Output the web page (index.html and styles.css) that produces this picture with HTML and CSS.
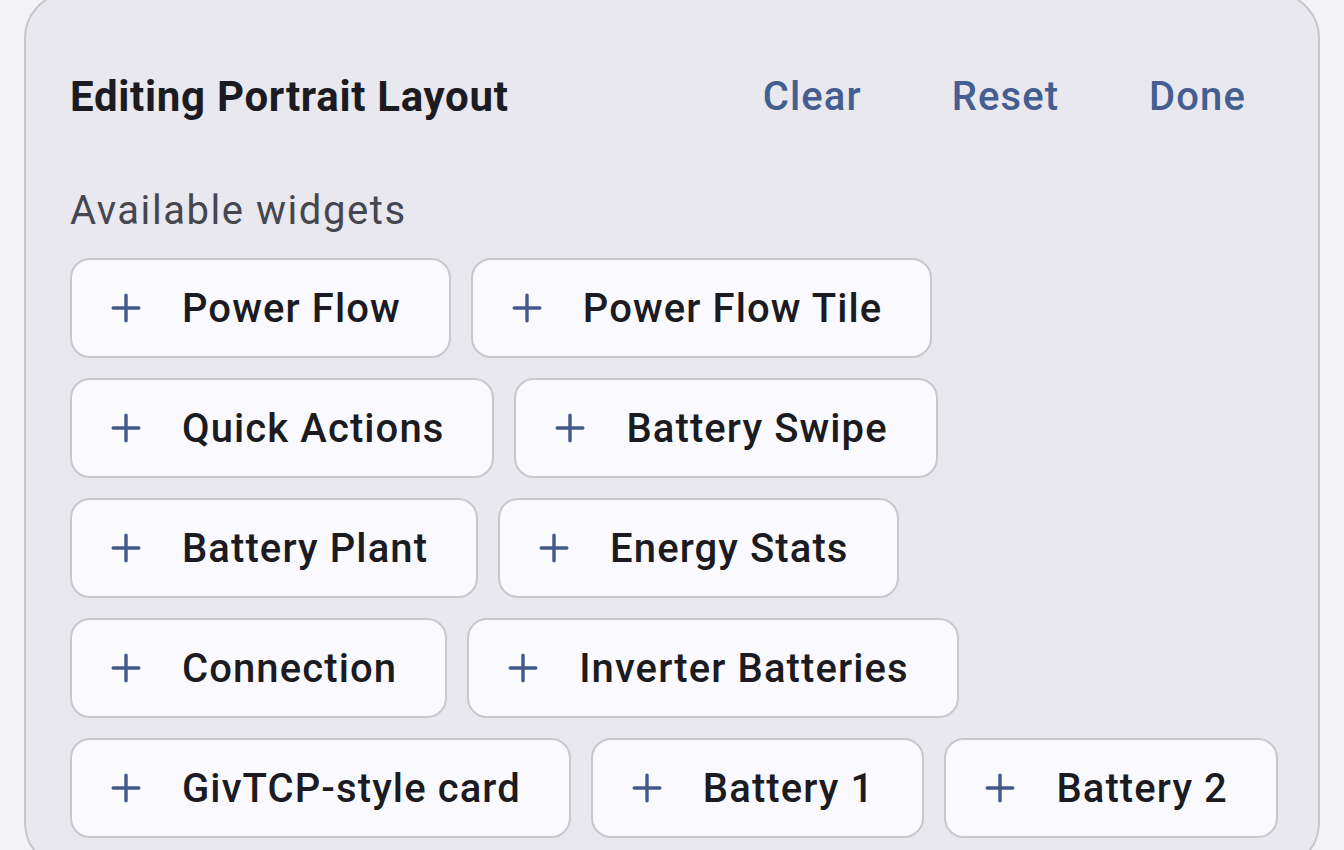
FILE: index.html
```html
<!DOCTYPE html>
<html lang="en">
<head>
<meta charset="utf-8">
<title>Editing Portrait Layout</title>
<link rel="stylesheet" href="styles.css">
</head>
<body>
<main class="card">
  <header class="card-header">
    <h1 class="title">Editing Portrait Layout</h1>
    <nav class="actions">
      <button class="text-btn">Clear</button>
      <button class="text-btn">Reset</button>
      <button class="text-btn">Done</button>
    </nav>
  </header>
  <p class="subtitle">Available widgets</p>
  <section class="chips">
    <div class="chip-row">
      <button class="chip"><svg class="plus" viewBox="0 0 30 30"><path d="M15 2.2V27.8M2.2 15H27.8"/></svg><span>Power Flow</span></button>
      <button class="chip"><svg class="plus" viewBox="0 0 30 30"><path d="M15 2.2V27.8M2.2 15H27.8"/></svg><span>Power Flow Tile</span></button>
    </div>
    <div class="chip-row">
      <button class="chip"><svg class="plus" viewBox="0 0 30 30"><path d="M15 2.2V27.8M2.2 15H27.8"/></svg><span>Quick Actions</span></button>
      <button class="chip"><svg class="plus" viewBox="0 0 30 30"><path d="M15 2.2V27.8M2.2 15H27.8"/></svg><span>Battery Swipe</span></button>
    </div>
    <div class="chip-row">
      <button class="chip"><svg class="plus" viewBox="0 0 30 30"><path d="M15 2.2V27.8M2.2 15H27.8"/></svg><span>Battery Plant</span></button>
      <button class="chip"><svg class="plus" viewBox="0 0 30 30"><path d="M15 2.2V27.8M2.2 15H27.8"/></svg><span>Energy Stats</span></button>
    </div>
    <div class="chip-row">
      <button class="chip"><svg class="plus" viewBox="0 0 30 30"><path d="M15 2.2V27.8M2.2 15H27.8"/></svg><span>Connection</span></button>
      <button class="chip"><svg class="plus" viewBox="0 0 30 30"><path d="M15 2.2V27.8M2.2 15H27.8"/></svg><span>Inverter Batteries</span></button>
    </div>
    <div class="chip-row">
      <button class="chip"><svg class="plus" viewBox="0 0 30 30"><path d="M15 2.2V27.8M2.2 15H27.8"/></svg><span>GivTCP-style card</span></button>
      <button class="chip"><svg class="plus" viewBox="0 0 30 30"><path d="M15 2.2V27.8M2.2 15H27.8"/></svg><span>Battery 1</span></button>
      <button class="chip"><svg class="plus" viewBox="0 0 30 30"><path d="M15 2.2V27.8M2.2 15H27.8"/></svg><span>Battery 2</span></button>
    </div>
  </section>
</main>
</body>
</html>
```
FILE: styles.css
```css
html, body {
  margin: 0;
  padding: 0;
  height: 100%;
  overflow: hidden;
}

body {
  background: #f2f2f7;
  font-family: Roboto, "Noto Sans", "Liberation Sans", sans-serif;
  color: #1b1b21;
}

.card {
  box-sizing: border-box;
  margin: -8px 0 0 24px;
  width: 1296px;
  height: 877px;
  background: #e8e8ee;
  border: 2px solid #c7c7cc;
  border-radius: 46px;
  padding: 79px 26px 0 44px;
}

.card-header {
  display: flex;
  align-items: center;
  justify-content: space-between;
  height: 48px;
}

.title {
  margin: 0;
  font-size: 42px;
  line-height: 48px;
  font-weight: 700;
  letter-spacing: 0.7px;
  color: #1b1b21;
}

.actions {
  display: flex;
}

.text-btn {
  border: 0;
  background: none;
  padding: 0 45px;
  font-family: inherit;
  font-size: 40px;
  line-height: 48px;
  font-weight: 500;
  letter-spacing: 1.1px;
  color: #445e91;
}

.text-btn:last-child {
  padding-right: 46px;
}

.subtitle {
  margin: 66px 0 0;
  font-size: 40px;
  line-height: 48px;
  font-weight: 400;
  letter-spacing: 1.55px;
  color: #45464f;
}

.chips {
  margin-top: 23px;
  display: flex;
  flex-direction: column;
  gap: 20px;
}

.chip-row {
  display: flex;
  gap: 20px;
}

.chip {
  box-sizing: border-box;
  display: flex;
  align-items: center;
  height: 100px;
  margin: 0;
  padding: 0 48px 0 39px;
  gap: 41px;
  background: #f9f9fe;
  border: 2px solid #c7c7cc;
  border-radius: 20px;
  font-family: inherit;
  font-size: 40px;
  font-weight: 500;
  letter-spacing: 1.1px;
  color: #1b1b21;
}

.plus {
  width: 30px;
  height: 30px;
  flex: none;
  fill: none;
  stroke: #42598a;
  stroke-width: 3.4;
  stroke-linecap: round;
}
```
